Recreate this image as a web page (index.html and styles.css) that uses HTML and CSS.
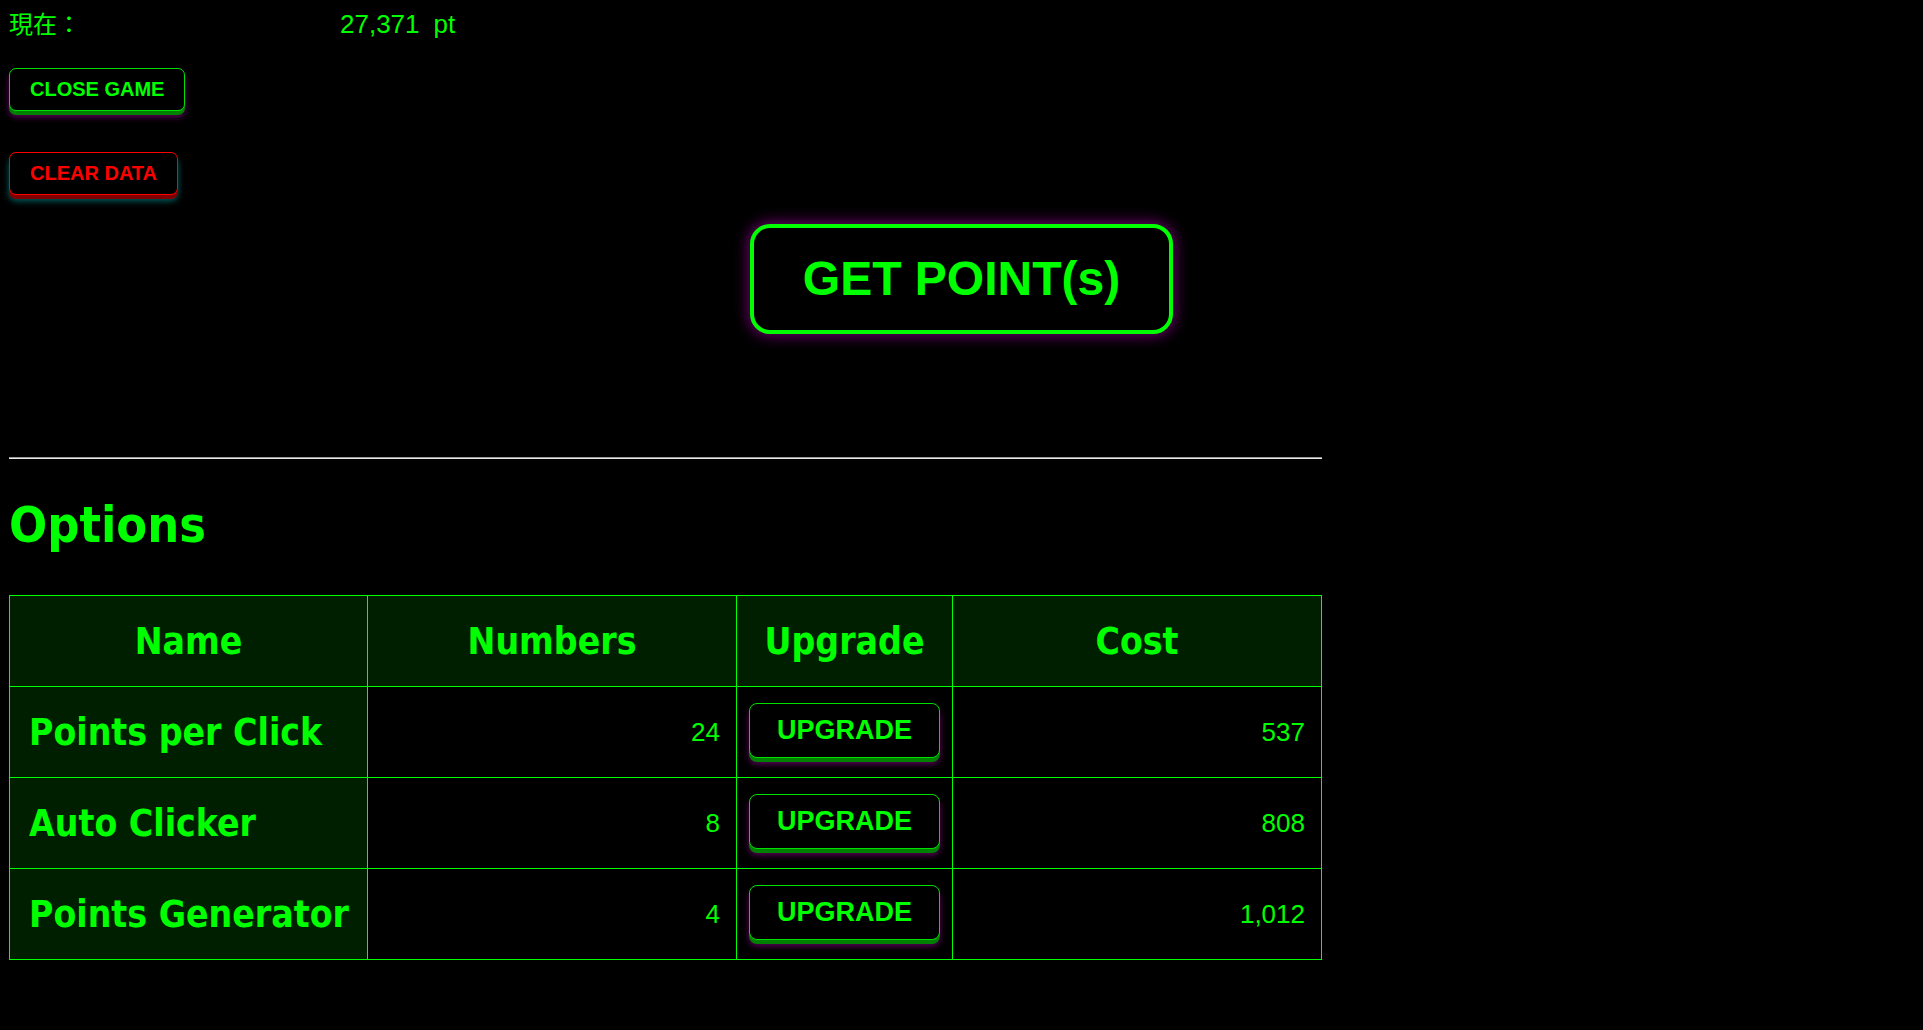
FILE: index.html
```html
<!DOCTYPE html>
<html lang="ja">
<head>
<meta charset="utf-8">
<title>Clicker</title>
<link rel="stylesheet" href="styles.css">
</head>
<body>
<div class="page">
  <div class="score">
    <span class="score-label">現在：</span>
    <span class="score-value">27,371</span>
    <span class="score-unit">pt</span>
  </div>

  <div class="btn-row btn-row-close">
    <button class="btn btn-green">CLOSE GAME</button>
  </div>
  <div class="btn-row btn-row-clear">
    <button class="btn btn-red">CLEAR DATA</button>
  </div>

  <div class="main-action">
    <button class="get-btn">GET POINT(s)</button>
  </div>

  <div class="options">
    <hr class="divider">
    <h2 class="options-title">Options</h2>
    <table class="opt-table">
      <colgroup>
        <col class="c-name">
        <col class="c-num">
        <col class="c-up">
        <col class="c-cost">
      </colgroup>
      <thead>
        <tr>
          <th>Name</th>
          <th>Numbers</th>
          <th>Upgrade</th>
          <th>Cost</th>
        </tr>
      </thead>
      <tbody>
        <tr>
          <td class="name">Points per Click</td>
          <td class="num">24</td>
          <td class="up"><button class="btn btn-green btn-up">UPGRADE</button></td>
          <td class="num">537</td>
        </tr>
        <tr>
          <td class="name">Auto Clicker</td>
          <td class="num">8</td>
          <td class="up"><button class="btn btn-green btn-up">UPGRADE</button></td>
          <td class="num">808</td>
        </tr>
        <tr>
          <td class="name">Points Generator</td>
          <td class="num">4</td>
          <td class="up"><button class="btn btn-green btn-up">UPGRADE</button></td>
          <td class="num">1,012</td>
        </tr>
      </tbody>
    </table>
  </div>
</div>
</body>
</html>
```
FILE: styles.css
```css
html, body {
  margin: 0;
  padding: 0;
  background: #000;
}

body {
  color: #00ff00;
  font-family: "Liberation Sans", Arial, sans-serif;
}

.page {
  padding: 8px 9px 40px 9px;
}

.score {
  display: flex;
  align-items: baseline;
  height: 30px;
  line-height: 30px;
}

.score-label {
  width: 331px;
  font-family: "Noto Sans CJK JP", sans-serif;
  font-size: 24px;
}

.score-value {
  font-size: 26px;
}

.score-unit {
  font-size: 26px;
  margin-left: 14px;
}

.btn-row {
  display: flex;
}

.btn-row-close {
  margin-top: 30px;
}

.btn-row-clear {
  margin-top: 41px;
}

.btn {
  font-family: "Liberation Sans", Arial, sans-serif;
  font-weight: bold;
  font-size: 20px;
  line-height: 23px;
  padding: 9px 20px 9px 20px;
  background: #000;
  border-radius: 7px;
  cursor: pointer;
}

.btn-green {
  color: #00ff00;
  border: 1px solid #00e000;
  box-shadow: 0 4px 0 #008000, 0 6px 6px rgba(128, 0, 128, 0.75);
}

.btn-red {
  color: #ff0000;
  border: 1px solid #ff0000;
  box-shadow: 0 4px 0 #800000, 0 6px 6px rgba(0, 128, 128, 0.75);
}

.main-action {
  display: flex;
  justify-content: center;
  margin-top: 29px;
}

.get-btn {
  font-family: "Liberation Sans", Arial, sans-serif;
  font-weight: bold;
  font-size: 48px;
  line-height: 54px;
  color: #00ff00;
  background: #000;
  border: 4px solid #00ff00;
  border-radius: 20px;
  padding: 24px 49px;
  box-shadow: 0 0 14px 2px rgba(128, 0, 128, 0.85);
  cursor: pointer;
}

.options {
  width: 1313px;
}

.divider {
  margin: 123px 0 0 0;
  height: 0;
  border: none;
  border-top: 1px solid #9a9a9a;
  border-bottom: 1px solid #e8e8e8;
}

.options-title {
  margin: 37px 0 0 0;
  font-family: "DejaVu Sans Condensed", "DejaVu Sans", sans-serif;
  font-weight: bold;
  font-size: 50px;
  line-height: 58px;
}

.opt-table {
  margin-top: 41px;
  width: 1313px;
  border-collapse: collapse;
  table-layout: fixed;
}

.c-name { width: 358px; }
.c-num { width: 369px; }
.c-up { width: 216px; }
.c-cost { width: 369px; }

.opt-table th,
.opt-table td {
  border: 1px solid #00ff00;
  height: 91px;
  padding: 0;
  box-sizing: border-box;
}

.opt-table th {
  background: #001e00;
  font-family: "DejaVu Sans Condensed", "DejaVu Sans", sans-serif;
  font-weight: bold;
  font-size: 37px;
  text-align: center;
}

.opt-table td.name {
  background: #001e00;
  font-family: "DejaVu Sans Condensed", "DejaVu Sans", sans-serif;
  font-weight: bold;
  font-size: 37px;
  padding-left: 19px;
  white-space: nowrap;
}

.opt-table td.num {
  text-align: right;
  font-size: 26px;
  padding-right: 16px;
}

.opt-table td.up {
  padding: 0 12px;
  text-align: center;
}

.btn-up {
  width: 100%;
  font-size: 27px;
  line-height: 31px;
  padding: 11px 0;
  border-radius: 8px;
  margin-top: -3px;
}
```
